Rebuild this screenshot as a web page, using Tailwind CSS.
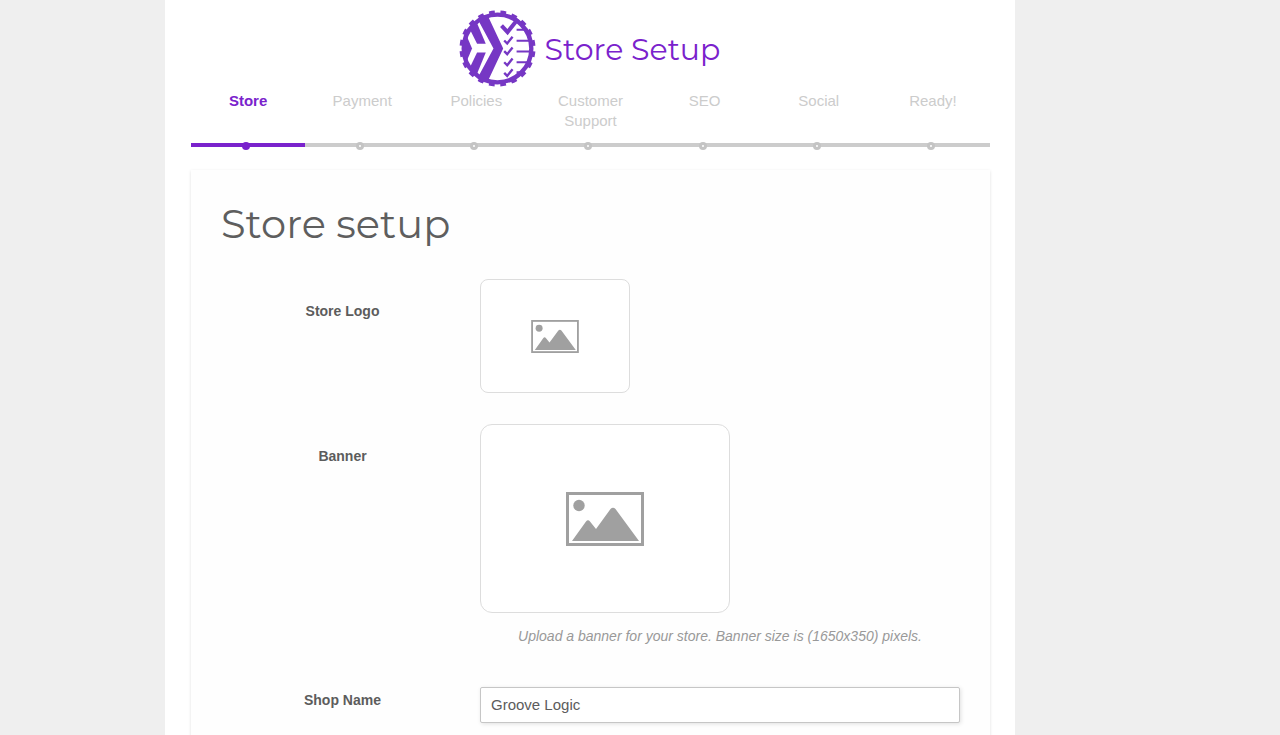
<!DOCTYPE html>
<html lang="en">
<head>
<meta charset="utf-8">
<meta name="viewport" content="width=device-width, initial-scale=1">
<title>Store Setup</title>
<script src="https://cdn.jsdelivr.net/npm/@tailwindcss/browser@4"></script>
</head>
<body class="min-h-screen bg-[#efefef] font-['Liberation_Sans',Arial,sans-serif] text-[#5c5c5c]">
<svg class="hidden" aria-hidden="true">
  <symbol id="picture" viewBox="0 0 78 54">
    <rect x="1.5" y="1.5" width="75" height="51" fill="none" stroke="#a0a0a0" stroke-width="3"/>
    <circle cx="13" cy="13.500" r="5.700" fill="#a0a0a0"/>
    <path d="M6 49 L20 29.500 Q22 27 24 29.500 L30 37 L44.500 17 Q47 14.500 49.500 17 L73 49 Z" fill="#a0a0a0"/>
  </symbol>
</svg>
<div class="flex min-h-screen overflow-x-hidden">
<div class="w-[165px] shrink-0"></div>
<main class="w-full max-w-[850px] bg-white pt-[10px] pr-[25px] pl-[26px]">
  <header class="flex items-center justify-center gap-[9px] pr-[2px]">
    <svg class="size-[77px]" viewBox="28 31 230 230" fill="none" stroke="#7637c4" aria-hidden="true">
      <circle cx="143" cy="146" r="106" stroke-width="15" pathLength="40" stroke-dasharray="1 1" stroke-dashoffset="-0.5"/>
      <circle cx="143" cy="146" r="101" stroke-width="13"/>
      <g fill="#7637c4" stroke="none">
        <path d="M86 62 L94 48 L113 46 L160 146 L113 246 L94 244 L86 230 L131 146 Z"/>
        <path d="M58 84 L81 68 L108 132 L82 132 Z"/>
        <path d="M58 208 L81 224 L108 158 L82 158 Z"/>
        <path d="M48 101 L67 146 L48 191 L38 146 Z"/>
      </g>
      <path d="M155 78 L173 97 L204 58" stroke-width="12"/>
      <path d="M163 122 L172 131 L188 111 M163 154 L172 163 L188 143 M163 187 L172 196 L188 176 M163 219 L172 228 L188 208" stroke-width="7"/>
      <path d="M200 90 H232 M200 123 H242 M200 155 H242 M200 187 H238 M200 217 H218" stroke-width="6"/>
    </svg>
    <h1 class="pt-[2px] font-['Montserrat','Inter',sans-serif] text-[30px] leading-10 font-normal text-[#7a22cc]">Store Setup</h1>
  </header>
  <ol class="mt-1 grid grid-cols-7 text-center text-[15px] leading-5 text-[#cccccc]">
    <li class="relative border-b-4 border-[#7a22cc] px-4 pb-3 font-bold text-[#7a22cc]">Store<span class="absolute left-1/2 -bottom-[7px] -ml-[6px] size-2 rounded-full bg-[#7a22cc]"></span></li>
    <li class="relative border-b-4 border-[#cccccc] px-4 pb-3">Payment<span class="absolute left-1/2 -bottom-[7px] -ml-[6px] size-2 rounded-full border-3 border-[#c4c4c4] bg-white"></span></li>
    <li class="relative border-b-4 border-[#cccccc] px-4 pb-3">Policies<span class="absolute left-1/2 -bottom-[7px] -ml-[6px] size-2 rounded-full border-3 border-[#c4c4c4] bg-white"></span></li>
    <li class="relative border-b-4 border-[#cccccc] px-4 pb-3">Customer Support<span class="absolute left-1/2 -bottom-[7px] -ml-[6px] size-2 rounded-full border-3 border-[#c4c4c4] bg-white"></span></li>
    <li class="relative border-b-4 border-[#cccccc] px-4 pb-3">SEO<span class="absolute left-1/2 -bottom-[7px] -ml-[6px] size-2 rounded-full border-3 border-[#c4c4c4] bg-white"></span></li>
    <li class="relative border-b-4 border-[#cccccc] px-4 pb-3">Social<span class="absolute left-1/2 -bottom-[7px] -ml-[6px] size-2 rounded-full border-3 border-[#c4c4c4] bg-white"></span></li>
    <li class="relative border-b-4 border-[#cccccc] px-4 pb-3">Ready!<span class="absolute left-1/2 -bottom-[7px] -ml-[6px] size-2 rounded-full border-3 border-[#c4c4c4] bg-white"></span></li>
  </ol>
  <form class="mt-[23px] bg-[#fefefe] px-[30px] pt-7 pb-10 shadow-[0_1px_3px_rgba(0,0,0,0.13)]">
    <h2 class="font-['Montserrat','Inter',sans-serif] text-[40px] leading-[52px] font-normal text-[#5e5e5e]">Store setup</h2>
    <div class="mt-[29px] grid grid-cols-[243px_1fr] gap-x-4 gap-y-[31px] text-sm">
      <label for="logo" class="pt-[22px] text-center leading-5 font-bold">Store Logo</label>
      <div>
        <button id="logo" type="button" aria-label="Store Logo" class="flex h-[114px] w-[150px] items-center justify-center rounded-lg border border-[#dddddd] bg-white"><svg class="h-[33px] w-[48px]"><use href="#picture"/></svg></button>
      </div>
      <label for="banner" class="pt-[22px] text-center leading-5 font-bold">Banner</label>
      <div>
        <button id="banner" type="button" aria-label="Banner" class="flex h-[189px] w-[250px] items-center justify-center rounded-xl border border-[#dddddd] bg-white"><svg class="h-[54px] w-[78px]"><use href="#picture"/></svg></button>
        <p class="mt-[13px] text-center leading-5 text-[#999999] italic">Upload a banner for your store. Banner size is (1650x350) pixels.</p>
      </div>
      <label for="shop" class="pt-[13px] text-center leading-5 font-bold">Shop Name</label>
      <div class="pt-[10px]">
        <input id="shop" type="text" value="Groove Logic" class="h-9 w-full rounded-xs border border-[#c6c6c6] bg-white px-[10px] pb-[2px] text-[15px] shadow-[1px_1px_4px_rgba(0,0,0,0.12)]">
      </div>
    </div>
  </form>
</main>
</div>
</body>
</html>
